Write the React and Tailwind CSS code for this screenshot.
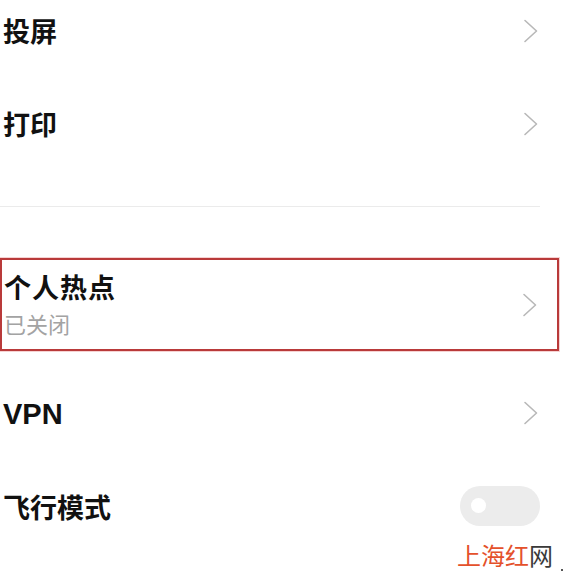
import React from 'react';

const font = { fontFamily: '"Noto Sans CJK SC", "Noto Sans", sans-serif' };

const Chevron = () => (
  <svg width="16" height="24" viewBox="0 0 16 24" className="shrink-0">
    <path d="M2 1.5 L13.5 12 L2 22.5" fill="none" stroke="#b8b8b8" strokeWidth="1.6" strokeLinecap="round" strokeLinejoin="round" />
  </svg>
);

const Row = ({ title, latin = false, className = '' }) => (
  <div className={`flex items-center h-[64px] pl-[3px] pr-[25px] ${className}`}>
    {latin ? (
      <span className="text-[29px] font-bold text-[#111] leading-none" style={{ fontFamily: '"Liberation Sans", Arial, sans-serif' }}>
        {title}
      </span>
    ) : (
      <span className="text-[27px] font-bold text-[#111] leading-none -mt-[3px]">{title}</span>
    )}
    <div className="ml-auto -mt-[2px]">
      <Chevron />
    </div>
  </div>
);

export default function App() {
  return (
    <div className="w-[564px] h-[577px] bg-white overflow-hidden flex flex-col" style={font}>
      <Row title="投屏" />
      <Row title="打印" className="mt-[29px]" />

      <div className="mt-[49px] w-[540px] h-px bg-[#ebebeb]"></div>

      <div className="mt-[51px] w-[559px] h-[93px] border-2 border-[#b93a3a] shadow-[0_0_0_1px_#f6d2d2] flex items-center pl-[2px] pr-[19px]">
        <div className="flex flex-col -mt-[2px]">
          <span className="text-[27px] font-bold text-[#111] leading-none tracking-[1px]">个人热点</span>
          <span className="mt-[12px] text-[22px] text-[#a3a3a3] leading-none">已关闭</span>
        </div>
        <div className="ml-auto">
          <Chevron />
        </div>
      </div>

      <Row title="VPN" latin className="mt-[31px]" />

      <div className="mt-[29px] flex items-center h-[64px] pl-[3px] pr-[24px]">
        <span className="text-[27px] font-bold text-[#111] leading-none -mt-[2px]">飞行模式</span>
        <div className="ml-auto -mt-[3px] w-[80px] h-[40px] rounded-full bg-[#ececec] flex items-center pl-[11px]">
          <div className="w-[15px] h-[15px] rounded-full bg-white"></div>
        </div>
      </div>

      <div className="mt-[4px] flex justify-end items-end pr-[1px]">
        <span className="text-[24px] leading-none">
          <span className="text-[#e4512b]">上海红</span>
          <span className="text-[#3a3a3a]">网</span>
        </span>
        <span className="ml-[8px] mb-[-4px] w-[2px] h-[2px] bg-[#555]"></span>
      </div>
    </div>
  );
}
